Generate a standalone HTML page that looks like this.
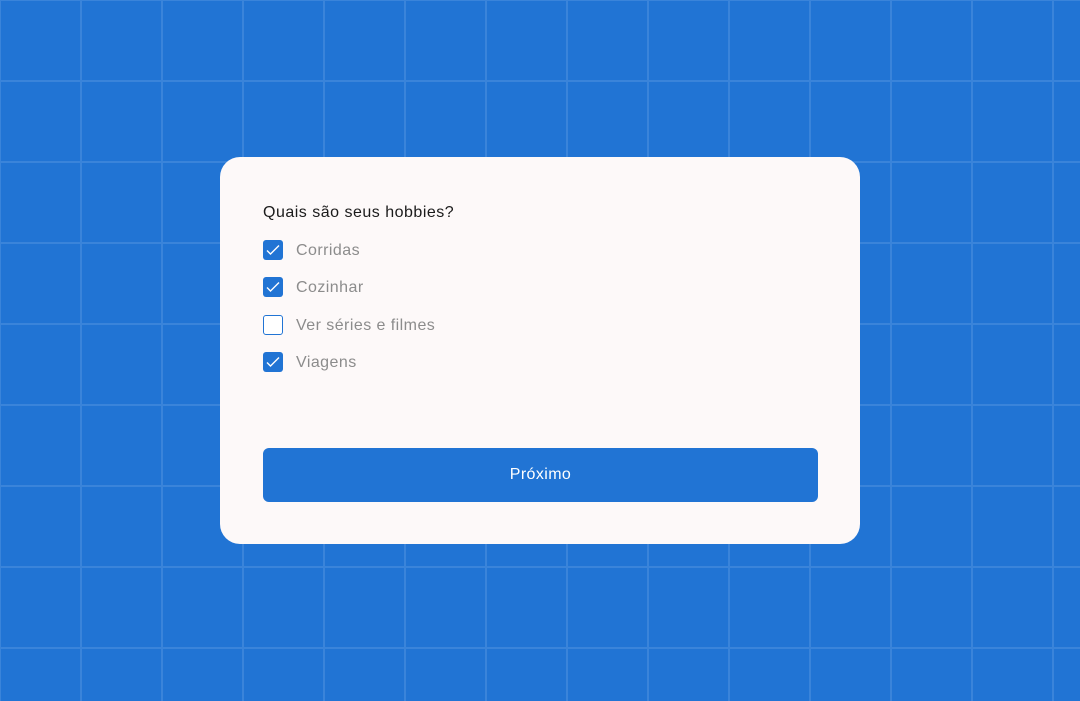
<!DOCTYPE html>
<html><head><style>
html,body{margin:0;width:1080px;height:701px;overflow:hidden}
body{background-color:#2174d4;background-image:linear-gradient(to right,#3a84da 2px,transparent 2px),linear-gradient(to bottom,#3a84da 2px,transparent 2px);background-size:81px 81px;background-position:-1px -1px;font-family:"Liberation Sans",sans-serif;position:relative}
.card{position:absolute;left:220px;top:157px;width:640px;height:387px;background:#fdf9f9;border-radius:20px}
h1{position:absolute;left:43px;top:47px;margin:0;font-size:16px;font-weight:normal;color:#1b1b1b;letter-spacing:0.5px}
.row{position:absolute;left:43px;height:20px;display:flex;align-items:center}
.cb{width:20px;height:20px;box-sizing:border-box;border-radius:3px;background:#2174d4;display:flex;align-items:center;justify-content:center}
.cb.off{background:#fff;border:1.5px solid #2174d4}
.row span{margin-left:13px;font-size:16px;color:#8c8c8c;letter-spacing:0.45px;position:relative;top:1px}
.btn{position:absolute;left:43px;top:291px;width:555px;height:54px;background:#2174d4;border-radius:6px;color:#fff;font-size:16px;letter-spacing:0.4px;display:flex;align-items:center;justify-content:center}
</style></head><body>
<div class="card">
<h1>Quais são seus hobbies?</h1>
<div class="row" style="top:83px"><div class="cb"><svg width="16" height="16" viewBox="0 0 16 16"><path d="M2 8.5l3.5 3.5L14 3.5" stroke="#fff" stroke-width="1.4" fill="none"/></svg></div><span>Corridas</span></div>
<div class="row" style="top:120px"><div class="cb"><svg width="16" height="16" viewBox="0 0 16 16"><path d="M2 8.5l3.5 3.5L14 3.5" stroke="#fff" stroke-width="1.4" fill="none"/></svg></div><span>Cozinhar</span></div>
<div class="row" style="top:158px"><div class="cb off"></div><span>Ver séries e filmes</span></div>
<div class="row" style="top:195px"><div class="cb"><svg width="16" height="16" viewBox="0 0 16 16"><path d="M2 8.5l3.5 3.5L14 3.5" stroke="#fff" stroke-width="1.4" fill="none"/></svg></div><span>Viagens</span></div>
<div class="btn">Próximo</div>
</div>
</body></html>
